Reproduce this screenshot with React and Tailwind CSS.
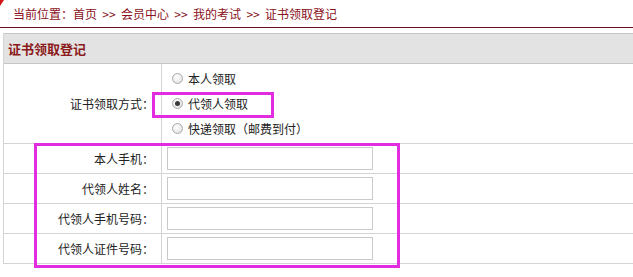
import React from 'react';

const font = "font-['Noto_Sans_CJK_SC','Noto_Sans',sans-serif]";

function Radio({ checked, children }) {
  return (
    <label className="flex h-[25px] items-center">
      <span className="ml-[10px] flex h-[11px] w-[11px] items-center justify-center rounded-full border border-[#a9a9a9] bg-[radial-gradient(circle_at_40%_35%,#ffffff,#dcdcdc)]">
        {checked && <span className="h-[5px] w-[5px] rounded-full bg-[#3a3a3a]" />}
      </span>
      <span className="ml-[5px] text-[12px] text-[#222]">{children}</span>
    </label>
  );
}

function FieldRow({ label }) {
  return (
    <div className="flex h-[30px] border-b border-[#d4d4d4]">
      <div className="flex w-[158px] items-center justify-end border-r border-[#d4d4d4] pr-[7px] text-[12px] text-[#222]">
        {label}
      </div>
      <div className="flex items-center pl-[5px]">
        <input className="h-[23px] w-[206px] border border-[#cacaca] bg-white outline-none" />
      </div>
    </div>
  );
}

const Sep = () => <span className="w-[24px] text-center">&gt;&gt;</span>;

export default function App() {
  return (
    <div className={`relative h-[277px] w-[633px] overflow-hidden bg-white ${font}`}>
      <div className="absolute left-0 top-0 h-[6px] w-[4px] bg-[#d01818] [clip-path:polygon(0_0,100%_0,0_100%)]" />

      <div className="flex h-[27px] items-center pl-[13px] text-[12px] text-[#8a1020]">
        <span>当前位置：首页</span>
        <Sep />
        <span>会员中心</span>
        <Sep />
        <span>我的考试</span>
        <Sep />
        <span>证书领取登记</span>
      </div>
      <div className="h-px bg-[#6b0f1a]" />

      <div className="ml-[3px] mt-[5px] border-l border-[#d4d4d4]">
        <div className="flex h-[31px] items-center border-y border-[#c6c6c6] bg-[#e3e3e3] pl-[4px] text-[13px] font-bold text-[#8b1a1a]">
          证书领取登记
        </div>

        <div className="flex h-[80px] border-b border-[#d4d4d4]">
          <div className="flex w-[158px] items-center justify-end border-r border-[#d4d4d4] pr-[7px] text-[12px] text-[#222]">
            证书领取方式：
          </div>
          <div className="flex flex-col justify-center">
            <Radio>本人领取</Radio>
            <Radio checked>代领人领取</Radio>
            <Radio>快递领取（邮费到付）</Radio>
          </div>
        </div>

        <FieldRow label="本人手机：" />
        <FieldRow label="代领人姓名：" />
        <FieldRow label="代领人手机号码：" />
        <FieldRow label="代领人证件号码：" />
      </div>

      <div className="pointer-events-none absolute left-[152px] top-[92px] h-[26px] w-[122px] border-[3px] border-[#e22ce2]" />
      <div className="pointer-events-none absolute left-[34px] top-[143px] h-[125px] w-[366px] border-[3px] border-[#e22ce2]" />
    </div>
  );
}
